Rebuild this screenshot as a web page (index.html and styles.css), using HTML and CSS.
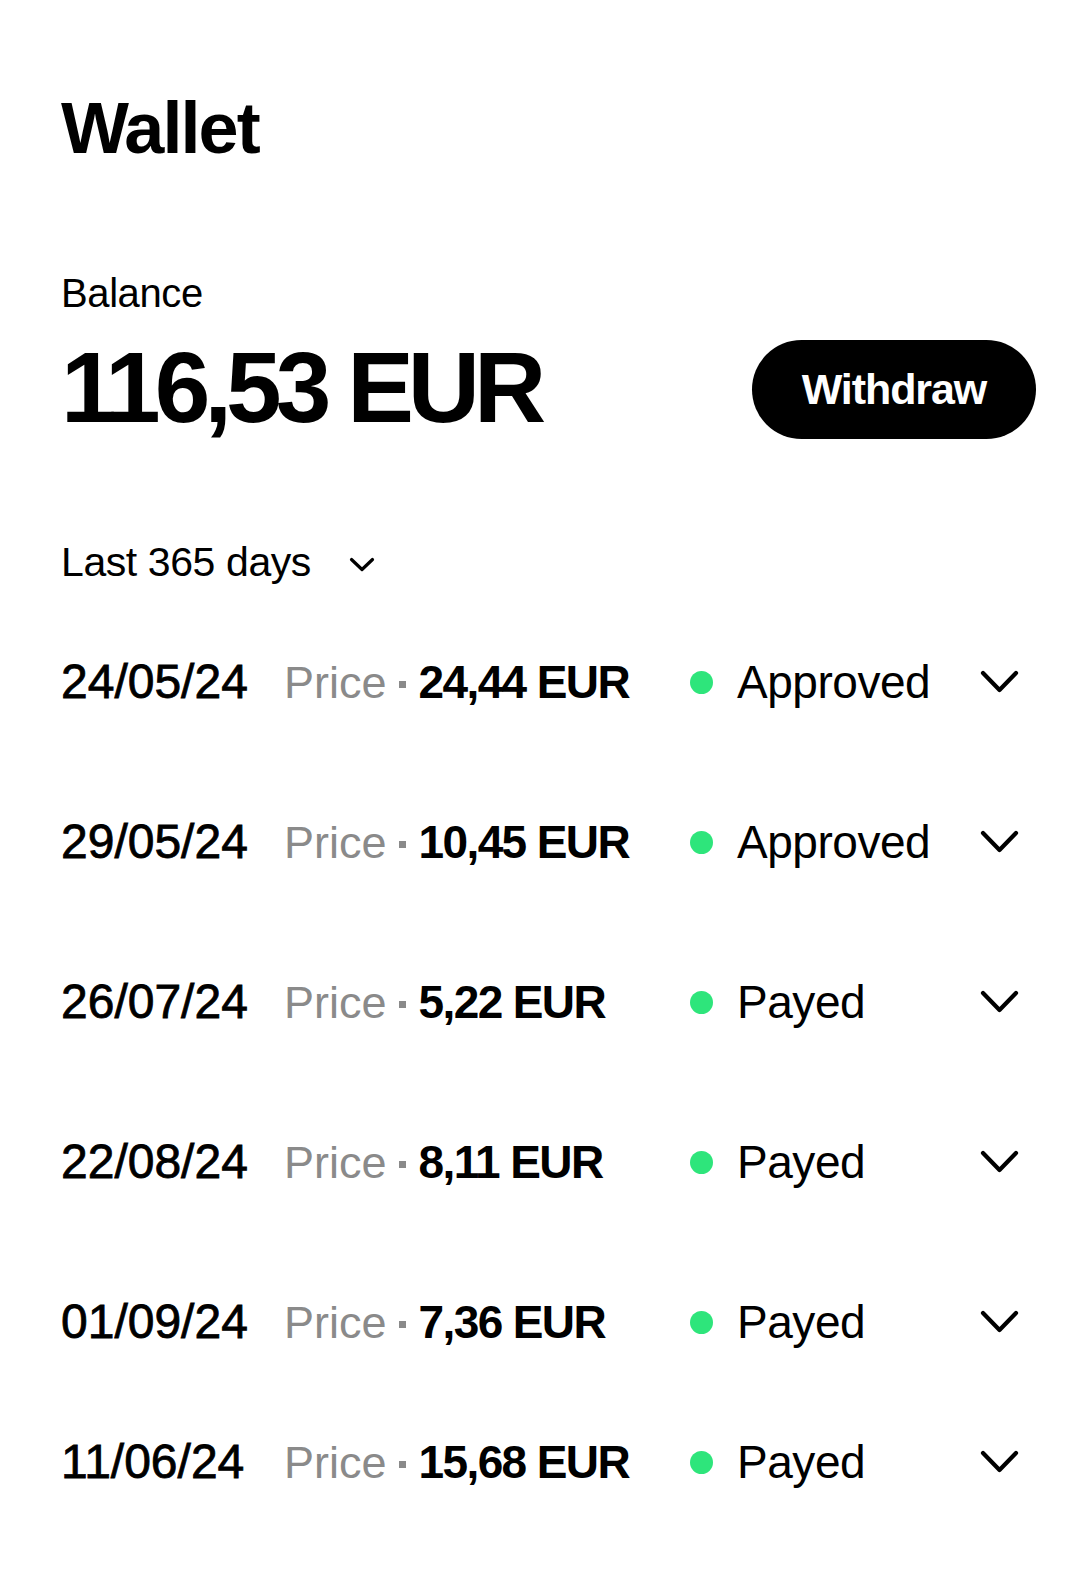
FILE: index.html
```html
<!DOCTYPE html>
<html lang="en">
<head>
  <meta charset="UTF-8">
  <meta name="viewport" content="width=device-width, initial-scale=1.0">
  <title>Wallet</title>
  <link rel="stylesheet" href="styles.css">
</head>
<body>
  <div class="page">
    <h1 class="title">Wallet</h1>

    <div class="balance-label">Balance</div>
    <div class="balance-row">
      <div class="balance-amount">116,53 EUR</div>
      <button class="withdraw-btn">Withdraw</button>
    </div>

    <div class="filter">
      <span>Last 365 days</span>
      <svg class="filter-chevron" width="26" height="15" viewBox="0 0 26 15">
        <polyline points="2.5,2.5 13,12.5 23.5,2.5" fill="none" stroke="#000" stroke-width="3.2" stroke-linecap="round" stroke-linejoin="round"/>
      </svg>
    </div>

    <div class="transactions">
      <div class="row">
        <span class="date">24/05/24</span>
        <span class="price"><span class="price-label">Price</span><span class="sep"></span><span class="price-value">24,44 EUR</span></span>
        <span class="dot"></span>
        <span class="status">Approved</span>
        <svg class="chevron" width="39" height="24" viewBox="0 0 39 24"><polyline points="3,3 19.5,20 36,3" fill="none" stroke="#000" stroke-width="4.2" stroke-linecap="round" stroke-linejoin="round"/></svg>
      </div>
      <div class="row">
        <span class="date">29/05/24</span>
        <span class="price"><span class="price-label">Price</span><span class="sep"></span><span class="price-value">10,45 EUR</span></span>
        <span class="dot"></span>
        <span class="status">Approved</span>
        <svg class="chevron" width="39" height="24" viewBox="0 0 39 24"><polyline points="3,3 19.5,20 36,3" fill="none" stroke="#000" stroke-width="4.2" stroke-linecap="round" stroke-linejoin="round"/></svg>
      </div>
      <div class="row">
        <span class="date">26/07/24</span>
        <span class="price"><span class="price-label">Price</span><span class="sep"></span><span class="price-value">5,22 EUR</span></span>
        <span class="dot"></span>
        <span class="status">Payed</span>
        <svg class="chevron" width="39" height="24" viewBox="0 0 39 24"><polyline points="3,3 19.5,20 36,3" fill="none" stroke="#000" stroke-width="4.2" stroke-linecap="round" stroke-linejoin="round"/></svg>
      </div>
      <div class="row">
        <span class="date">22/08/24</span>
        <span class="price"><span class="price-label">Price</span><span class="sep"></span><span class="price-value">8,11 EUR</span></span>
        <span class="dot"></span>
        <span class="status">Payed</span>
        <svg class="chevron" width="39" height="24" viewBox="0 0 39 24"><polyline points="3,3 19.5,20 36,3" fill="none" stroke="#000" stroke-width="4.2" stroke-linecap="round" stroke-linejoin="round"/></svg>
      </div>
      <div class="row">
        <span class="date">01/09/24</span>
        <span class="price"><span class="price-label">Price</span><span class="sep"></span><span class="price-value">7,36 EUR</span></span>
        <span class="dot"></span>
        <span class="status">Payed</span>
        <svg class="chevron" width="39" height="24" viewBox="0 0 39 24"><polyline points="3,3 19.5,20 36,3" fill="none" stroke="#000" stroke-width="4.2" stroke-linecap="round" stroke-linejoin="round"/></svg>
      </div>
      <div class="row row-last">
        <span class="date">11/06/24</span>
        <span class="price"><span class="price-label">Price</span><span class="sep"></span><span class="price-value">15,68 EUR</span></span>
        <span class="dot"></span>
        <span class="status">Payed</span>
        <svg class="chevron" width="39" height="24" viewBox="0 0 39 24"><polyline points="3,3 19.5,20 36,3" fill="none" stroke="#000" stroke-width="4.2" stroke-linecap="round" stroke-linejoin="round"/></svg>
      </div>
    </div>
  </div>
</body>
</html>
```

FILE: styles.css
```css
body {
  margin: 0;
  padding: 0;
  background: #ffffff;
  color: #000000;
  font-family: "Liberation Sans", Arial, sans-serif;
}
.page {
  padding: 92px 56px 40px 61px;
}
.title {
  margin: 0;
  font-size: 72px;
  line-height: 1;
  font-weight: bold;
  letter-spacing: -0.027em;
}
.balance-label {
  margin-top: 109px;
  font-size: 40px;
  line-height: 1;
  letter-spacing: -0.01em;
}
.balance-row {
  display: flex;
  align-items: center;
  justify-content: space-between;
  margin-top: 21px;
}
.balance-amount {
  font-size: 100px;
  line-height: 1;
  font-weight: bold;
  letter-spacing: -0.06em;
}
.withdraw-btn {
  width: 284px;
  height: 99px;
  margin-top: 6px;
  border: none;
  border-radius: 50px;
  background: #000000;
  color: #ffffff;
  font-family: inherit;
  font-size: 43px;
  font-weight: bold;
  letter-spacing: -0.025em;
}
.filter {
  display: flex;
  align-items: center;
  gap: 38px;
  margin-top: 103px;
  font-size: 41px;
  line-height: 1;
  letter-spacing: -0.01em;
}
.filter-chevron {
  margin-top: 4px;
}
.transactions {
  margin-top: 19px;
}
.row {
  display: grid;
  grid-template-columns: 223px 406px 47px 243px 39px;
  align-items: center;
  height: 160px;
  font-size: 46px;
  line-height: 1;
}
.row-last {
  height: 120px;
}
.date {
  font-size: 48px;
  -webkit-text-stroke: 0.8px #000000;
}
.price {
  display: flex;
  align-items: center;
}
.price-label {
  font-size: 45px;
  color: #8a8a8a;
}
.sep {
  width: 7px;
  height: 7px;
  margin: 4px 13px 0 12px;
  background: #8a8a8a;
}
.price-value {
  font-weight: bold;
  letter-spacing: -0.035em;
}
.dot {
  width: 23px;
  height: 23px;
  border-radius: 50%;
  background: #2ee57b;
}
.status {
  letter-spacing: -0.01em;
}
.chevron {
  display: block;
}
```
